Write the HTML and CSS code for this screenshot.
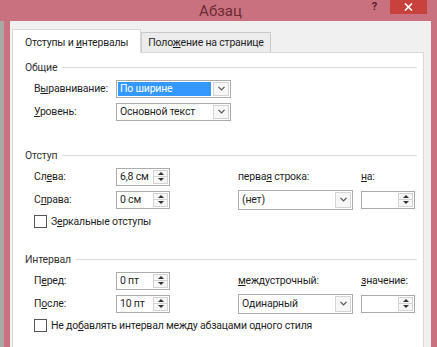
FILE: index.html
```html
<!DOCTYPE html>
<html lang="ru">
<head>
    <meta charset="UTF-8">
    <title>Абзац</title>
    <link rel="stylesheet" href="styles.css">
</head>
<body>
    <div class="window">
        <div class="titlebar">
            <span class="title">Абзац</span>
            <div class="caption-buttons">
                <span class="help">?</span>
                <span class="close">
                    <svg width="9" height="8" viewBox="0 0 9 8"><path d="M1 0.5 L8 7.5 M8 0.5 L1 7.5" stroke="#fff" stroke-width="1.6"/></svg>
                </span>
            </div>
        </div>
        <div class="frame">
            <div class="edge"></div>
            <div class="client">
                <div class="tabs">
                    <div class="tab active">Отступы и <u>и</u>нтервалы</div>
                    <div class="tab">Поло<u>ж</u>ение на странице</div>
                </div>
                <div class="panel">
                    <section class="group general">
                        <div class="group-title">Общие</div>
                        <div class="fields">
                            <span>В<u>ы</u>равнивание:</span>
                            <div class="combo selected">
                                <span class="value">По ширине</span>
                                <span class="drop"><svg width="7" height="5" viewBox="0 0 7 5"><path d="M0.5 0.8 L3.5 3.8 L6.5 0.8" fill="none" stroke="#555" stroke-width="1.2"/></svg></span>
                            </div>
                            <span></span><span></span>
                            <span><u>У</u>ровень:</span>
                            <div class="combo">
                                <span class="value">Основной текст</span>
                                <span class="drop"><svg width="7" height="5" viewBox="0 0 7 5"><path d="M0.5 0.8 L3.5 3.8 L6.5 0.8" fill="none" stroke="#555" stroke-width="1.2"/></svg></span>
                            </div>
                        </div>
                    </section>

                    <section class="group">
                        <div class="group-title">Отступ</div>
                        <div class="fields with-check">
                            <span>Сл<u>е</u>ва:</span>
                            <div class="spin">
                                <span class="value">6,8 см</span>
                                <span class="arrows"><span class="arrow up"></span><span class="arrow down"></span></span>
                            </div>
                            <span>перва<u>я</u> строка:</span>
                            <span><u>н</u>а:</span>
                            <span>С<u>п</u>рава:</span>
                            <div class="spin">
                                <span class="value">0 см</span>
                                <span class="arrows"><span class="arrow up"></span><span class="arrow down"></span></span>
                            </div>
                            <div class="combo tall">
                                <span class="value">(нет)</span>
                                <span class="drop"><svg width="7" height="5" viewBox="0 0 7 5"><path d="M0.5 0.8 L3.5 3.8 L6.5 0.8" fill="none" stroke="#555" stroke-width="1.2"/></svg></span>
                            </div>
                            <div class="spin">
                                <span class="value"></span>
                                <span class="arrows"><span class="arrow up"></span><span class="arrow down"></span></span>
                            </div>
                            <label class="check"><span class="box"></span><span>З<u>е</u>ркальные отступы</span></label>
                        </div>
                    </section>

                    <section class="group">
                        <div class="group-title">Интервал</div>
                        <div class="fields with-check">
                            <span>П<u>е</u>ред:</span>
                            <div class="spin">
                                <span class="value">0 пт</span>
                                <span class="arrows"><span class="arrow up"></span><span class="arrow down"></span></span>
                            </div>
                            <span><u>м</u>еждустрочный:</span>
                            <span><u>з</u>начение:</span>
                            <span>П<u>о</u>сле:</span>
                            <div class="spin">
                                <span class="value">10 пт</span>
                                <span class="arrows"><span class="arrow up"></span><span class="arrow down"></span></span>
                            </div>
                            <div class="combo tall">
                                <span class="value">Одинарный</span>
                                <span class="drop"><svg width="7" height="5" viewBox="0 0 7 5"><path d="M0.5 0.8 L3.5 3.8 L6.5 0.8" fill="none" stroke="#555" stroke-width="1.2"/></svg></span>
                            </div>
                            <div class="spin">
                                <span class="value"></span>
                                <span class="arrows"><span class="arrow up"></span><span class="arrow down"></span></span>
                            </div>
                            <label class="check"><span class="box"></span><span>Не до<u>б</u>авлять интервал между абзацами одного стиля</span></label>
                        </div>
                    </section>
                </div>
            </div>
        </div>
    </div>
</body>
</html>
```

FILE: styles.css
```css
body {
    margin: 0;
    background: #c9717f;
    font-family: 'Roboto', 'Liberation Sans', sans-serif;
    font-size: 10.5px;
    letter-spacing: -0.2px;
    color: #1f1f1f;
}

u {
    text-decoration-thickness: 1px;
    text-underline-offset: 1px;
}

.window {
    height: 347px;
    display: flex;
    flex-direction: column;
    overflow: hidden;
}

/* title bar */
.titlebar {
    height: 21px;
    flex: none;
    display: grid;
    grid-template-columns: 1fr auto 1fr;
}

.title {
    grid-column: 2;
    font-size: 15px;
    letter-spacing: 0;
    line-height: 22px;
    color: #6e2a35;
    padding-left: 4px;
}

.caption-buttons {
    grid-column: 3;
    justify-self: end;
    display: flex;
    align-items: flex-start;
}

.help {
    font-size: 11px;
    font-weight: bold;
    color: #5a1f2a;
    line-height: 13px;
    margin-right: 13px;
}

.close {
    width: 37px;
    height: 14px;
    background: #c8413c;
    display: flex;
    align-items: center;
    justify-content: center;
    margin-right: 10px;
}

/* window body */
.frame {
    flex: 1;
    display: flex;
}

.edge {
    width: 4px;
    background: #a8a8a8;
    margin-right: 6px;
}

.client {
    flex: 1;
    display: flex;
    flex-direction: column;
    margin-right: 6px;
    padding: 8px 7px 0 2px;
    background: #f0f0f0;
}

.tabs {
    display: flex;
    align-items: flex-end;
    height: 23px;
}

.tab {
    height: 19px;
    line-height: 20px;
    padding: 0 6px;
    background: #ececec;
    border: 1px solid #c9c9c9;
    border-bottom: none;
    white-space: nowrap;
}

.tab.active {
    height: 23px;
    line-height: 25px;
    padding: 0 12px;
    background: #fff;
    border-color: #d9d9d9;
    margin-bottom: -1px;
    position: relative;
    z-index: 1;
}

.panel {
    flex: 1;
    background: #fff;
    border: 1px solid #d9d9d9;
    padding: 6px 6px 0 12px;
}

/* groups */
.group {
    margin-bottom: 20px;
}

.group.general {
    margin-bottom: 24px;
}

.group-title {
    display: flex;
    align-items: center;
    height: 16px;
    color: #333;
}

.group-title::after {
    content: "";
    flex: 1;
    height: 1px;
    background: #dcdcdc;
    margin-left: 5px;
}

.fields {
    display: grid;
    grid-template-columns: 82px 122px 123px 55px;
    grid-auto-rows: 23px;
    align-items: center;
    padding-left: 9px;
    margin-top: 2px;
    white-space: nowrap;
}

.fields.with-check {
    grid-template-rows: 23px 23px 20px;
}

/* controls */
.combo {
    width: 115px;
    height: 18px;
    box-sizing: border-box;
    border: 1px solid #acacac;
    background: #fff;
    display: flex;
}

.combo.tall {
    height: 20px;
}

.combo .value {
    flex: 1;
    padding: 0 3px;
    display: flex;
    align-items: center;
}

.combo.selected .value {
    margin: 1px;
    padding: 0 2px;
    background: #3399ff;
    color: #fff;
}

.combo .drop {
    width: 14px;
    margin: 1px;
    border: 1px solid #d4d4d4;
    background: #f7f7f7;
    display: flex;
    align-items: center;
    justify-content: center;
}

.spin {
    width: 54px;
    height: 18px;
    box-sizing: border-box;
    border: 1px solid #acacac;
    background: #fff;
    display: flex;
}

.spin .value {
    flex: 1;
    padding-left: 3px;
    display: flex;
    align-items: center;
}

.spin .arrows {
    width: 13px;
    margin: 1px;
    border: 1px solid #d4d4d4;
    background: #f7f7f7;
    display: flex;
    flex-direction: column;
}

.arrow {
    flex: 1;
    display: flex;
    align-items: center;
    justify-content: center;
}

.arrow.up {
    border-bottom: 1px solid #d4d4d4;
}

.arrow::before {
    content: "";
    border-left: 3px solid transparent;
    border-right: 3px solid transparent;
}

.arrow.up::before {
    border-bottom: 3px solid #333;
}

.arrow.down::before {
    border-top: 3px solid #333;
}

.check {
    grid-column: 1 / -1;
    display: flex;
    align-items: center;
    gap: 4px;
}

.box {
    width: 13px;
    height: 13px;
    box-sizing: border-box;
    border: 1px solid #555;
    background: #fff;
}
```
